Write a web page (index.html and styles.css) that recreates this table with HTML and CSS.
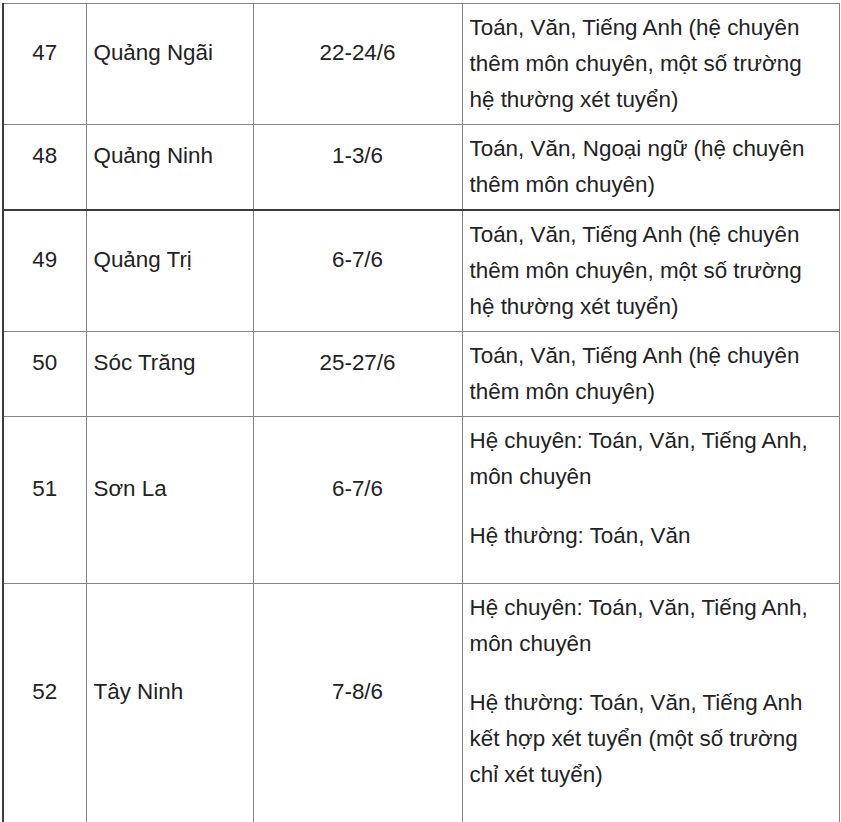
FILE: index.html
```html
<!DOCTYPE html>
<html lang="vi">
<head>
<meta charset="utf-8">
<link rel="stylesheet" href="styles.css">
</head>
<body>
<div class="wrap">
<table class="exam">
<colgroup>
<col class="c-no"><col class="c-prov"><col class="c-date"><col class="c-subj">
</colgroup>
<tbody>
<tr>
<td class="no"><p>47</p></td><td class="prov"><p>Quảng Ngãi</p></td><td class="date"><p>22-24/6</p></td>
<td class="subj">Toán, Văn, Tiếng Anh (hệ chuyên thêm môn chuyên, một số trường hệ thường xét tuyển)</td>
</tr>
<tr>
<td class="no"><p>48</p></td><td class="prov"><p>Quảng Ninh</p></td><td class="date"><p>1-3/6</p></td>
<td class="subj">Toán, Văn, Ngoại ngữ (hệ chuyên thêm môn chuyên)</td>
</tr>
<tr class="strong-top">
<td class="no"><p>49</p></td><td class="prov"><p>Quảng Trị</p></td><td class="date"><p>6-7/6</p></td>
<td class="subj">Toán, Văn, Tiếng Anh (hệ chuyên thêm môn chuyên, một số trường hệ thường xét tuyển)</td>
</tr>
<tr>
<td class="no"><p>50</p></td><td class="prov"><p>Sóc Trăng</p></td><td class="date"><p>25-27/6</p></td>
<td class="subj">Toán, Văn, Tiếng Anh (hệ chuyên thêm môn chuyên)</td>
</tr>
<tr>
<td class="no"><p>51</p></td><td class="prov"><p>Sơn La</p></td><td class="date"><p>6-7/6</p></td>
<td class="subj"><p>Hệ chuyên: Toán, Văn, Tiếng Anh, môn chuyên</p><p>Hệ thường: Toán, Văn</p></td>
</tr>
<tr>
<td class="no"><p>52</p></td><td class="prov"><p>Tây Ninh</p></td><td class="date"><p>7-8/6</p></td>
<td class="subj"><p>Hệ chuyên: Toán, Văn, Tiếng Anh, môn chuyên</p><p>Hệ thường: Toán, Văn, Tiếng Anh kết hợp xét tuyển (một số trường chỉ xét tuyển)</p></td>
</tr>
</tbody>
</table>
</div>
</body>
</html>
```

FILE: styles.css
```css
html, body {
  margin: 0;
  padding: 0;
  background: #ffffff;
}

.wrap {
  padding: 3px 0 0 2px;
}

.exam {
  border-collapse: collapse;
  table-layout: fixed;
  width: 836px;
  font-family: "Liberation Sans", Arial, sans-serif;
  font-size: 22.4px;
  line-height: 36px;
  color: #222222;
}

.c-no { width: 83px; }
.c-prov { width: 167px; }
.c-date { width: 209px; }
.c-subj { width: 377px; }

.exam td {
  border: 1px solid #838383;
  padding: 6px 7px;
  vertical-align: middle;
}

.exam td.no {
  border-left: 2px solid #3c3c3c;
  text-align: center;
}

.exam td.date {
  text-align: center;
}

.exam tr.strong-top td {
  border-top: 2px solid #3c3c3c;
}

.exam p {
  margin: 0 0 23px;
}
```
